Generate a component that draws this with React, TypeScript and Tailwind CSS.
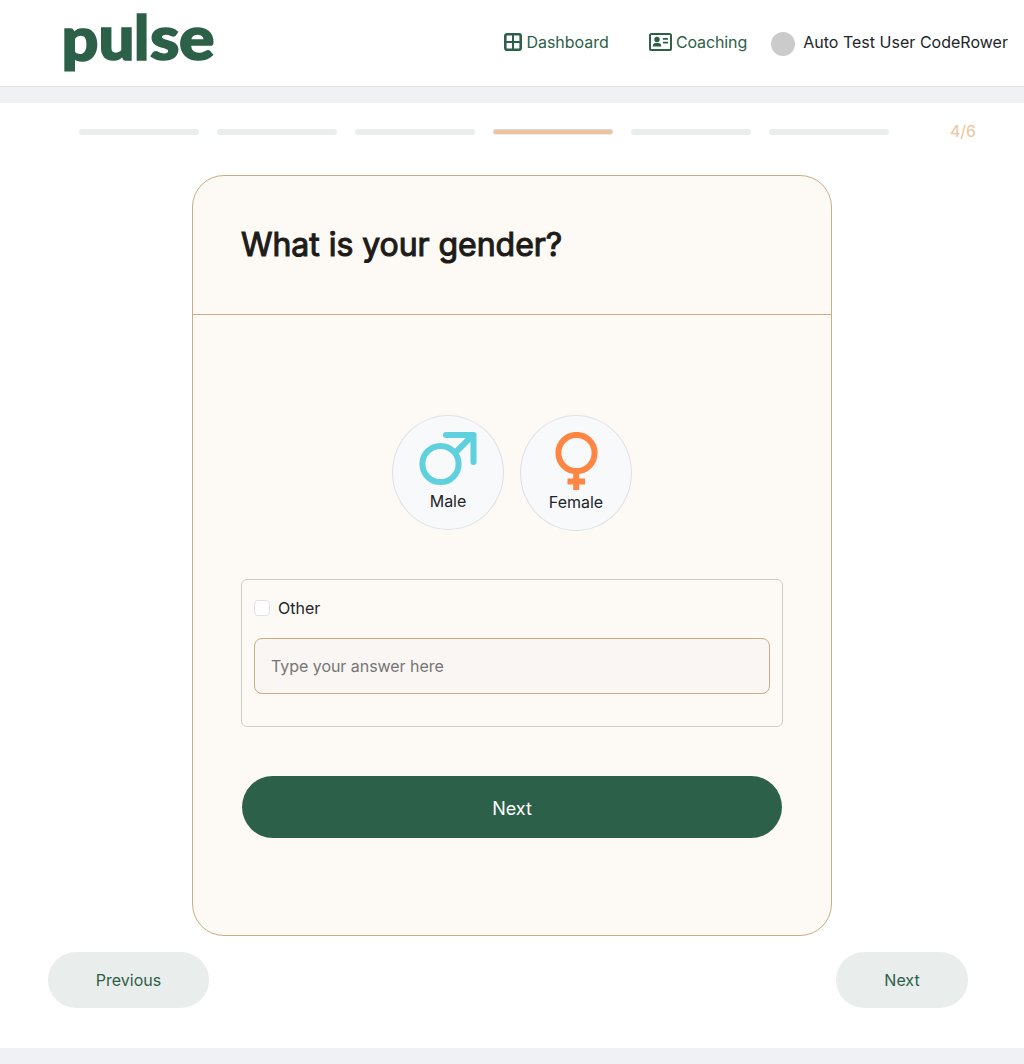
const STEPS = [1, 2, 3, 4, 5, 6];
const CURRENT = 4;

function Logo() {
  return (
    <svg width="160" height="80" viewBox="0 0 160 80" role="img" aria-label="pulse" className="block overflow-visible">
      <g
        fill="#2c6048"
        stroke="#2c6048"
        strokeWidth="1.6"
        className="font-['Lato',sans-serif] text-[60px] font-black"
      >
        <text x="-2.6" y="60.5" textLength="37" lengthAdjust="spacingAndGlyphs">p</text>
        <text x="34.5" y="60" textLength="36" lengthAdjust="spacingAndGlyphs">u</text>
        <text x="70" y="59.5">l</text>
        <text x="86" y="60" textLength="29.5" lengthAdjust="spacingAndGlyphs">s</text>
        <text x="115" y="60" textLength="35.5" lengthAdjust="spacingAndGlyphs">e</text>
      </g>
    </svg>
  );
}

function GridIcon() {
  return (
    <svg width="18" height="18" viewBox="0 0 18 18" fill="none" stroke="#2c6048" className="block">
      <rect x="1.3" y="1.3" width="15.4" height="15.4" rx="1.6" strokeWidth="2.6" />
      <path d="M9 1v16M1 9h16" strokeWidth="2" />
    </svg>
  );
}

function CardIcon() {
  return (
    <svg width="23" height="18" viewBox="0 0 23 18" fill="#2c6048" className="block">
      <rect x="1" y="1" width="21" height="16" rx="1.6" fill="none" stroke="#2c6048" strokeWidth="2" />
      <circle cx="8" cy="6.5" r="2.7" />
      <path d="M3.8 13.6v-.8c0-1.7 1.2-2.8 2.8-2.8h2.8c1.6 0 2.8 1.1 2.8 2.8v.8z" />
      <path d="M14 5.8h5M14 9.6h5" stroke="#2c6048" strokeWidth="1.8" />
    </svg>
  );
}

function MaleIcon() {
  return (
    <svg width="58" height="54" viewBox="0 0 58 54" fill="none" stroke="#5fd1de" strokeWidth="6" className="block">
      <circle cx="21.5" cy="32" r="18.1" />
      <path d="M34.8 22L54 3.2" />
      <path d="M27 3H54.5V30" strokeLinecap="round" strokeLinejoin="round" />
    </svg>
  );
}

function FemaleIcon() {
  return (
    <svg width="44" height="58" viewBox="0 0 44 58" fill="none" stroke="#ff8642" strokeWidth="6" className="block">
      <circle cx="22.5" cy="21" r="18.1" />
      <path d="M22.2 39v19M13.5 49.5h17.5" />
    </svg>
  );
}

export default function App() {
  return (
    <div className="h-[1064px] w-[1024px] overflow-hidden bg-[#f0f1f5] font-['Inter',sans-serif] text-base text-[#212529]">
      <header className="flex h-[87px] items-start justify-between border-b border-[#dee2e6] bg-white pl-16 pr-4">
        <Logo />
        <nav className="flex h-[84px] items-center text-[#2c6048]">
          <a className="mr-10 flex items-center gap-1">
            <GridIcon />
            <span>Dashboard</span>
          </a>
          <a className="mr-6 flex items-center gap-1">
            <CardIcon />
            <span className="tracking-[-0.12px]">Coaching</span>
          </a>
          <div className="flex items-center gap-2 text-[#212529]">
            <span className="mt-[3px] h-6 w-6 rounded-full bg-[#cbcbcb]" />
            <span className="tracking-[0.02px]">Auto Test User CodeRower</span>
          </div>
        </nav>
      </header>

      <main className="mt-4 h-[945px] bg-white px-12 pt-4">
        <div className="flex h-6 items-center justify-between pl-[31px]">
          <div className="flex gap-[18px] pt-[2px]">
            {STEPS.map((s) => (
              <div key={s} className="h-1.5 w-[120px] rounded-[3px] bg-[#e9eeec]">
                {s === CURRENT && (
                  <div className="h-[5px] w-full rounded-[3px] border-x border-t border-[#d6dbdd] bg-[#ecc39a]" />
                )}
              </div>
            ))}
          </div>
          <span className="text-[#ecc39a]">4/6</span>
        </div>

        <section className="mx-auto mt-8 h-[761px] w-[640px] rounded-[32px] border border-[#c7ae84] bg-[#fdfaf5]">
          <div className="h-[139px] border-b border-[#c7ae84] px-12 pt-[49px]">
            <h1 className="text-[32px] font-normal leading-10 tracking-[-0.04px] text-[#1e1c1a] [-webkit-text-stroke:1.1px_#1e1c1a]">
              What is your gender?
            </h1>
          </div>
          <div className="px-12 pt-[100px]">
            <div className="flex items-start justify-center gap-4">
              <button className="flex h-[115px] w-28 flex-col items-center rounded-[50%] border border-[#dee2e6] bg-[#f8f9fb] pt-4">
                <MaleIcon />
                <span className="mt-[3px] leading-6">Male</span>
              </button>
              <button className="flex h-[116px] w-28 flex-col items-center rounded-[50%] border border-[#dee2e6] bg-[#f8f9fb] pt-4">
                <FemaleIcon />
                <span className="leading-6">Female</span>
              </button>
            </div>

            <div className="mt-12 h-[148px] rounded-md border border-[#cfcdc9] px-3 pt-4">
              <label className="flex h-6 items-center gap-2">
                <span className="h-4 w-4 rounded-[4px] border border-[#dee2ea] bg-white" />
                <span>Other</span>
              </label>
              <input
                type="text"
                placeholder="Type your answer here"
                className="mt-[18px] block h-14 w-full rounded-lg border border-[#c7ae84] bg-[#faf6f3] px-4 tracking-[-0.04px] placeholder:text-[#757575]"
              />
            </div>

            <button className="mx-auto mt-[49px] block h-[62px] w-[540px] rounded-[32px] bg-[#2c6048] pt-1 text-lg text-white">
              Next
            </button>
          </div>
        </section>

        <div className="mt-4 flex justify-between pr-2">
          <button className="h-14 w-[161px] rounded-[32px] bg-[#e9eeec] text-[#2c6048]">Previous</button>
          <button className="h-14 w-[132px] rounded-[32px] bg-[#e9eeec] text-[#2c6048]">Next</button>
        </div>
      </main>
    </div>
  );
}
